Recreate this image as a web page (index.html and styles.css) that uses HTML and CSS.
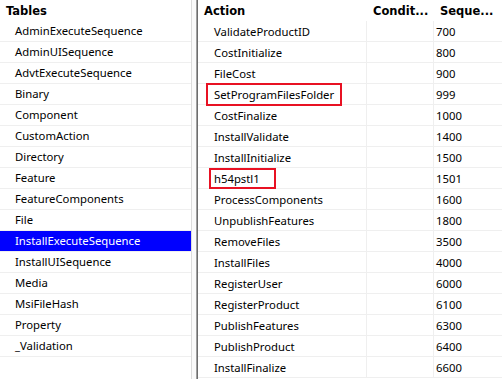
FILE: index.html
```html
<!DOCTYPE html>
<html lang="en">
<head>
  <meta charset="UTF-8">
  <title>Orca - InstallExecuteSequence</title>
  <link rel="stylesheet" href="styles.css">
</head>
<body>

<div class="window">
  <div class="tables">
    <div class="head"><span class="head-cell">Tables</span></div>
    <div class="item">AdminExecuteSequence</div>
    <div class="item">AdminUISequence</div>
    <div class="item">AdvtExecuteSequence</div>
    <div class="item">Binary</div>
    <div class="item">Component</div>
    <div class="item">CustomAction</div>
    <div class="item">Directory</div>
    <div class="item">Feature</div>
    <div class="item">FeatureComponents</div>
    <div class="item">File</div>
    <div class="item selected">InstallExecuteSequence</div>
    <div class="item">InstallUISequence</div>
    <div class="item">Media</div>
    <div class="item">MsiFileHash</div>
    <div class="item">Property</div>
    <div class="item">_Validation</div>
  </div>

  <div class="splitter"></div>

  <div class="grid">
    <div class="head cols">
      <span class="head-cell">Action</span>
      <span class="head-cell">Condit...</span>
      <span class="head-cell">Seque...</span>
    </div>
    <div class="row cols"><span class="action">ValidateProductID</span><span class="cond"></span><span class="seq">700</span></div>
    <div class="row cols"><span class="action">CostInitialize</span><span class="cond"></span><span class="seq">800</span></div>
    <div class="row cols"><span class="action">FileCost</span><span class="cond"></span><span class="seq">900</span></div>
    <div class="row cols"><span class="action"><span class="mark">SetProgramFilesFolder</span></span><span class="cond"></span><span class="seq">999</span></div>
    <div class="row cols"><span class="action">CostFinalize</span><span class="cond"></span><span class="seq">1000</span></div>
    <div class="row cols"><span class="action">InstallValidate</span><span class="cond"></span><span class="seq">1400</span></div>
    <div class="row cols"><span class="action">InstallInitialize</span><span class="cond"></span><span class="seq">1500</span></div>
    <div class="row cols"><span class="action"><span class="mark mark-small">h54pstl1</span></span><span class="cond"></span><span class="seq">1501</span></div>
    <div class="row cols"><span class="action">ProcessComponents</span><span class="cond"></span><span class="seq">1600</span></div>
    <div class="row cols"><span class="action">UnpublishFeatures</span><span class="cond"></span><span class="seq">1800</span></div>
    <div class="row cols"><span class="action">RemoveFiles</span><span class="cond"></span><span class="seq">3500</span></div>
    <div class="row cols"><span class="action">InstallFiles</span><span class="cond"></span><span class="seq">4000</span></div>
    <div class="row cols"><span class="action">RegisterUser</span><span class="cond"></span><span class="seq">6000</span></div>
    <div class="row cols"><span class="action">RegisterProduct</span><span class="cond"></span><span class="seq">6100</span></div>
    <div class="row cols"><span class="action">PublishFeatures</span><span class="cond"></span><span class="seq">6300</span></div>
    <div class="row cols"><span class="action">PublishProduct</span><span class="cond"></span><span class="seq">6400</span></div>
    <div class="row cols"><span class="action">InstallFinalize</span><span class="cond"></span><span class="seq">6600</span></div>
  </div>
</div>

</body>
</html>
```

FILE: styles.css
```css
body {
  margin: 0;
  background: #fff;
  font-family: "Noto Sans", "Open Sans", sans-serif;
  font-size: 11.3px;
  color: #000;
  overflow: hidden;
}

.window {
  display: flex;
  height: 379px;
}

/* left list of tables */
.tables {
  width: 191px;
  border-right: 1px solid #dcdcdc;
}

.head {
  height: 21px;
  display: flex;
  align-items: center;
}
.head-cell {
  font-family: "DejaVu Sans", sans-serif;
  font-weight: bold;
  font-size: 11.5px;
  padding-left: 6px;
}

.item {
  height: 20px;
  line-height: 20px;
  padding-left: 15px;
  border-bottom: 1px solid #efefef;
  white-space: nowrap;
}
.item.selected {
  background: #0000ff;
  color: #fff;
}

.splitter {
  width: 4px;
  background: #fafafa;
  border-right: 1px solid #a0a0a0;
  box-shadow: 1px 0 0 #6d6d6d;
  margin-right: 1px;
}

/* right grid */
.grid {
  flex: 1;
}
.cols {
  display: grid;
  grid-template-columns: 169px 67px 1fr;
}
.head.cols {
  display: grid;
}

.row {
  height: 20px;
  border-bottom: 1px solid #efefef;
}
.row > span {
  display: flex;
  align-items: center;
  height: 20px;
  white-space: nowrap;
}
.action {
  padding-left: 16px;
  border-right: 1px solid #efefef;
}
.cond {
  border-right: 1px solid #efefef;
}
.seq {
  padding-left: 2px;
}

/* red annotation boxes */
.mark {
  align-self: flex-start;
  box-sizing: border-box;
  height: 23px;
  line-height: 19px;
  margin: -1px 0 0 -8px;
  padding: 0 6px;
  border: 2px solid #e81123;
}
.mark-small {
  height: 21px;
  line-height: 17px;
  margin: 0 0 0 -5px;
  padding: 0 14px 0 3px;
}
```
